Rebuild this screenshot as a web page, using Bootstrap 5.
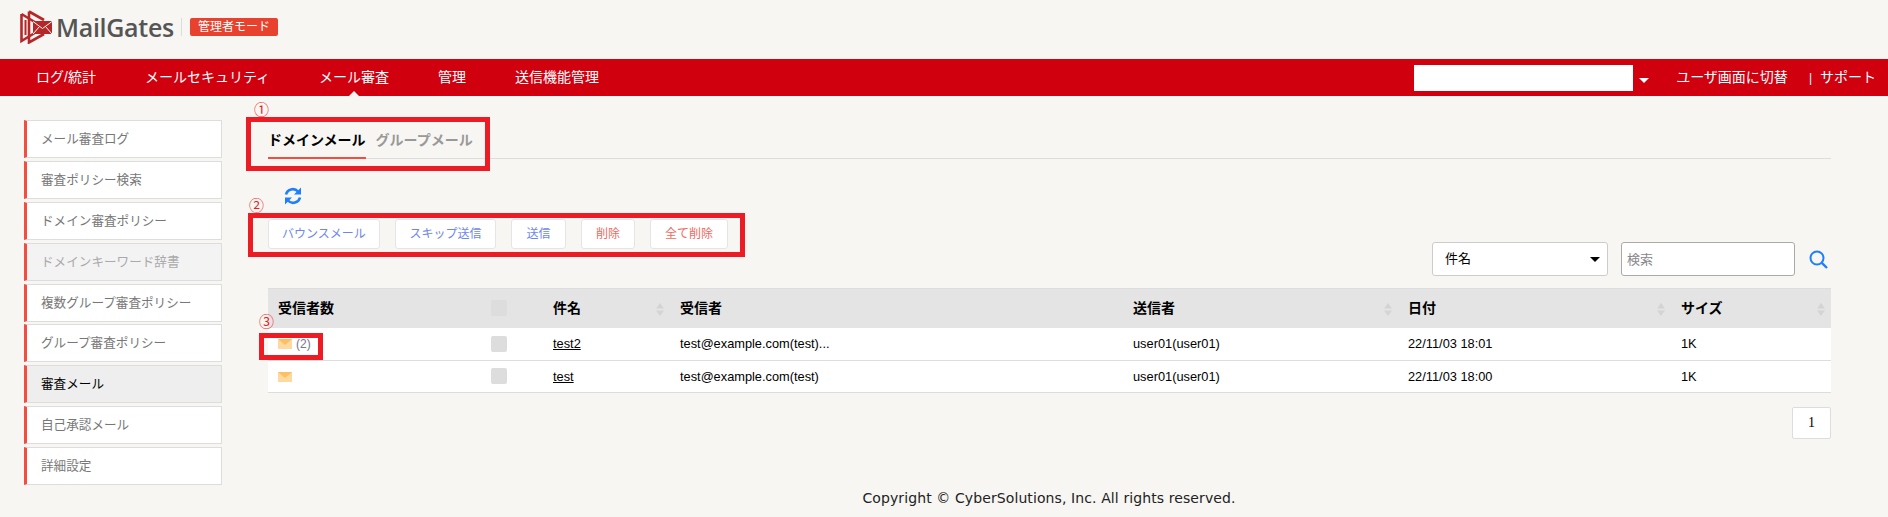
<!DOCTYPE html>
<html lang="ja">
<head>
    <meta charset="UTF-8" />
    <title>MailGates</title>
    <link href="https://cdn.jsdelivr.net/npm/bootstrap@5.3.0/dist/css/bootstrap.min.css" rel="stylesheet" />
    <style>
        body { background: #f7f6f2; color: #000; font-family: "Liberation Sans", "Noto Sans CJK JP", sans-serif; font-size: 13px; height: 517px; overflow: hidden; position: relative; }
        a { color: inherit; text-decoration: none; }

        .top-head { height: 59px; padding: 0 0 5px 20px; }
        .logo-word { font-family: "Open Sans", "Liberation Sans", sans-serif; font-size: 25px; font-weight: 600; color: #555; letter-spacing: -.3px; line-height: 34px; margin-left: 4px; width: 116px; white-space: nowrap; }
        .logo-sep { width: 1px; height: 18px; background: #ddd; margin: 0 8px 0 9px; }
        .mode-tag { background: #e8412e; color: #fff; font-size: 12px; width: 88px; height: 18px; line-height: 18px; text-align: center; border-radius: 2px; }

        .red-bar { background: #d0000f; height: 37px; color: #fff; font-size: 14px; }
        .red-menu { padding-left: 36px; gap: 49px; height: 37px; }
        .red-menu a { line-height: 37px; position: relative; color: #fff; display: block; }
        .red-menu a.on::after { content: ""; position: absolute; left: 50%; bottom: 0; margin-left: -5px; border: 5px solid transparent; border-top: 0; border-bottom-color: #f7f6f2; }
        .acct-box { width: 219px; height: 26px; background: #fff; }
        .acct-caret { width: 0; height: 0; border: 5px solid transparent; border-top-color: #fff; border-bottom: 0; margin: 6px 27px 0 6px; }
        .bar-right { padding-right: 12px; }
        .bar-pipe { font-size: 12px; margin: 0 8px 0 21px; }

        .side-col { width: 198px; margin: 24px 0 0 24px; flex: none; gap: 2.9px; }
        .side-item { height: 38px; line-height: 36px; background: #fff; border: 1px solid #ddd; border-left: 3px solid #f44c3e; padding-left: 14px; color: #777; font-size: 12.6px; display: block; }
        .side-item.off { background: #f3f3f3; color: #aaa; }
        .side-item.cur { background: #eee; color: #000; }

        .main-col { margin-left: 46px; width: 1563px; flex: none; }
        .tab-row { height: 63px; border-bottom: 1px solid #ddd; padding-top: 31px; gap: 10px; }
        .tab-link { font-size: 14px; font-weight: 700; color: #999; height: 32px; line-height: 27px; display: block; }
        .tab-link.on { color: #000; border-bottom: 2px solid #f44c3e; }
        .reload { margin: 28px 0 0 16px; height: 18px; display: block; }
        .act-row { gap: 15px; margin-top: 14px; }
        .act-btn { height: 30px; background: #fff; border: 1px solid #e5e5e5; border-radius: 3px; font-size: 12px; color: #6e86f0; padding: 0; text-align: center; }
        .act-btn.del { color: #ee6a5f; }
        .w-a { width: 112px; } .w-b { width: 101px; } .w-c { width: 55px; } .w-d { width: 54px; } .w-e { width: 78px; }

        .find-row { margin-top: -7px; height: 34px; }
        .find-sel { width: 176px; height: 34px; background: #fff; border: 1px solid #ccc; border-radius: 3px; padding: 0 12px; line-height: 32px; position: relative; }
        .find-sel::after { content: ""; position: absolute; right: 7px; top: 14px; border: 5px solid transparent; border-top-color: #000; border-bottom: 0; }
        .find-in { width: 174px; height: 34px; margin-left: 13px; border: 1px solid #aaa; border-radius: 3px; padding: 0 5px; font-size: 13px; background: #fff; }
        .find-in::placeholder { color: #888; }
        .find-go { margin: 0 3px 0 14px; }

        .mail-table { width: 1563px; margin: 12px 0 0; table-layout: fixed; background: #fff; border-collapse: collapse; }
        .mail-table th { background: #e4e4e4; font-size: 14px; height: 39px; padding: 0 10px; border-top: 1px solid #ddd; position: relative; }
        .mail-table td { height: 32.5px; padding: 0 10px; border-bottom: 1px solid #ddd; font-size: 12.8px; }
        .mail-table td a { text-decoration: underline; color: #000; }
        .cw-1 { width: 213px; } .cw-2 { width: 62px; } .cw-3 { width: 127px; } .cw-4 { width: 453px; } .cw-5 { width: 275px; } .cw-6 { width: 273px; }
        .sort-mark { position: absolute; right: 6px; top: 14px; width: 8px; height: 13px; }
        .tick { display: block; width: 16px; height: 16px; background: #ddd; border-radius: 2px; }
        .env { display: inline-block; vertical-align: -1px; }
        .cnt { color: #778; font-size: 12px; margin-left: 4px; }
        .page-one { width: 39px; height: 32px; line-height: 30px; margin: 14px 0 0 auto; text-align: center; background: #fff; border: 1px solid #ddd; border-radius: 2px; font-family: "Liberation Serif", serif; font-size: 14px; }
        .foot-line { position: absolute; left: 210px; right: 0; top: 488px; text-align: center; font-family: "DejaVu Sans", sans-serif; font-size: 14px; letter-spacing: .1px; color: #222; }

        /* 注釈の赤枠 */
        .note-box { position: absolute; border: 5px solid #ed1c24; }
        .nb-1 { left: 246px; top: 117px; width: 244px; height: 54px; }
        .nb-2 { left: 248px; top: 213px; width: 497px; height: 44px; }
        .nb-3 { left: 259px; top: 333px; width: 64px; height: 27px; }
        .note-num { position: absolute; color: #ed1c24; font-size: 15px; line-height: 15px; }
        .nn-1 { left: 254px; top: 102px; } .nn-2 { left: 249px; top: 198px; } .nn-3 { left: 259px; top: 314px; }
    </style>
</head>
<body>

<div class="top-head d-flex align-items-center">
    <svg width="32" height="34" viewBox="0 0 32 34" fill="none" stroke="#b5282a" stroke-width="2.6">
        <path d="M1.5 4 V31 L18 21 M1.5 4 L18 14"/>
        <path d="M9 1.5 V32.5 L24 24 M9 1.5 L24 10"/>
        <path d="M5.5 10 V25" stroke-width="2"/>
        <path d="M13 11 H32 V24 H13 Z" fill="#b5282a" stroke="none"/>
        <path d="M13 11.5 L22.5 18.5 L32 11.5 M13 24 L19.5 16.5 M32 24 L25.5 16.5" stroke="#f7f6f2" stroke-width="1"/>
    </svg>
    <span class="logo-word">MailGates</span>
    <span class="logo-sep"></span>
    <span class="mode-tag">管理者モード</span>
</div>

<div class="red-bar d-flex justify-content-between">
    <div class="red-menu d-flex">
        <a href="#">ログ/統計</a>
        <a href="#">メールセキュリティ</a>
        <a href="#" class="on">メール審査</a>
        <a href="#">管理</a>
        <a href="#">送信機能管理</a>
    </div>
    <div class="bar-right d-flex align-items-center">
        <div class="acct-box"></div>
        <div class="acct-caret"></div>
        <a href="#">ユーザ画面に切替</a>
        <span class="bar-pipe">|</span>
        <a href="#">サポート</a>
    </div>
</div>

<div class="d-flex">
    <div class="side-col d-flex flex-column">
        <a href="#" class="side-item">メール審査ログ</a>
        <a href="#" class="side-item">審査ポリシー検索</a>
        <a href="#" class="side-item">ドメイン審査ポリシー</a>
        <a href="#" class="side-item off">ドメインキーワード辞書</a>
        <a href="#" class="side-item">複数グループ審査ポリシー</a>
        <a href="#" class="side-item">グループ審査ポリシー</a>
        <a href="#" class="side-item cur">審査メール</a>
        <a href="#" class="side-item">自己承認メール</a>
        <a href="#" class="side-item">詳細設定</a>
    </div>

    <div class="main-col">
        <div class="tab-row d-flex">
            <a href="#" class="tab-link on">ドメインメール</a>
            <a href="#" class="tab-link">グループメール</a>
        </div>

        <svg class="reload" width="18" height="18" viewBox="0 0 18 18" fill="none" stroke="#1e7ffb" stroke-width="2.6">
            <path d="M2 7.5 A7 7 0 0 1 14 4.5"/>
            <path d="M16 10.5 A7 7 0 0 1 4 13.5"/>
            <path d="M17 0.5 V7.5 H10 Z" fill="#1e7ffb" stroke="none"/>
            <path d="M1 17.5 V10.5 H8 Z" fill="#1e7ffb" stroke="none"/>
        </svg>

        <div class="act-row d-flex">
            <button class="act-btn w-a">バウンスメール</button>
            <button class="act-btn w-b">スキップ送信</button>
            <button class="act-btn w-c">送信</button>
            <button class="act-btn del w-d">削除</button>
            <button class="act-btn del w-e">全て削除</button>
        </div>

        <div class="find-row d-flex justify-content-end align-items-center">
            <div class="find-sel">件名</div>
            <input class="find-in" type="text" placeholder="検索" />
            <svg class="find-go" width="19" height="19" viewBox="0 0 19 19" fill="none" stroke="#1e7ffb" stroke-width="2">
                <circle cx="8" cy="8" r="6.5"/>
                <path d="M12.8 12.8 L18 18" stroke-width="2.4"/>
            </svg>
        </div>

        <table class="mail-table">
            <colgroup>
                <col class="cw-1"><col class="cw-2"><col class="cw-3"><col class="cw-4"><col class="cw-5"><col class="cw-6"><col>
            </colgroup>
            <thead>
                <tr>
                    <th>受信者数</th>
                    <th><span class="tick"></span></th>
                    <th>件名<svg class="sort-mark"><use href="#sortArrows"/></svg></th>
                    <th>受信者</th>
                    <th>送信者<svg class="sort-mark"><use href="#sortArrows"/></svg></th>
                    <th>日付<svg class="sort-mark"><use href="#sortArrows"/></svg></th>
                    <th>サイズ<svg class="sort-mark"><use href="#sortArrows"/></svg></th>
                </tr>
            </thead>
            <tbody>
                <tr>
                    <td><svg class="env" width="14" height="10"><use href="#envIcon"/></svg><span class="cnt">(2)</span></td>
                    <td><span class="tick"></span></td>
                    <td><a href="#">test2</a></td>
                    <td>test@example.com(test)...</td>
                    <td>user01(user01)</td>
                    <td>22/11/03 18:01</td>
                    <td>1K</td>
                </tr>
                <tr>
                    <td><svg class="env" width="14" height="10"><use href="#envIcon"/></svg></td>
                    <td><span class="tick"></span></td>
                    <td><a href="#">test</a></td>
                    <td>test@example.com(test)</td>
                    <td>user01(user01)</td>
                    <td>22/11/03 18:00</td>
                    <td>1K</td>
                </tr>
            </tbody>
        </table>

        <div class="page-one">1</div>
    </div>
</div>

<div class="foot-line">Copyright © CyberSolutions, Inc. All rights reserved.</div>

<div class="note-box nb-1"></div>
<div class="note-box nb-2"></div>
<div class="note-box nb-3"></div>
<span class="note-num nn-1">①</span>
<span class="note-num nn-2">②</span>
<span class="note-num nn-3">③</span>

<svg width="0" height="0" class="d-block">
    <defs>
        <symbol id="sortArrows" viewBox="0 0 8 13">
            <path d="M4 0 L8 5.5 H0 Z M0 7.5 H8 L4 13 Z" fill="#d4d4d4"/>
        </symbol>
        <symbol id="envIcon" viewBox="0 0 14 10">
            <path d="M0 0 H14 V10 H0 Z" fill="#ffd99f"/>
            <path d="M0 0 H14 L7 6 Z" fill="#fdbf62"/>
        </symbol>
    </defs>
</svg>

</body>
</html>
